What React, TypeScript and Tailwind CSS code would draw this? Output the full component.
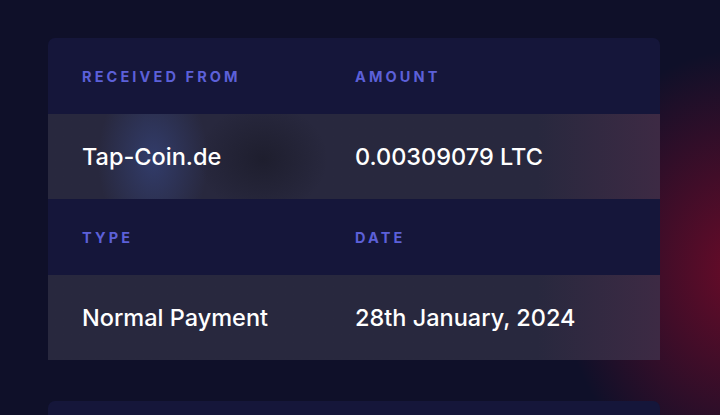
import React from "react";

function HeaderRow({ a, b }: { a: string; b: string }) {
  return (
    <div className="grid h-[76px] grid-cols-2 items-center bg-[#15163a] px-[34px] pt-[1px]">
      <div className="text-[14.5px] font-bold uppercase tracking-[0.215em] text-[#5c60d8]">{a}</div>
      <div className="pl-[1px] text-[14.5px] font-bold uppercase tracking-[0.215em] text-[#5c60d8]">{b}</div>
    </div>
  );
}

function ValueRow({ a, b, glow }: { a: string; b: string; glow?: boolean }) {
  return (
    <div className="relative grid h-[85px] grid-cols-2 items-center overflow-hidden bg-gradient-to-r from-[#28283e] via-[#28283e] via-80% to-[#3d2a44] px-[34px] pt-[1px]">
      {glow && (
        <>
          <div className="pointer-events-none absolute left-[50px] top-[-40px] h-[170px] w-[110px] rounded-full bg-[radial-gradient(closest-side,rgba(60,80,150,0.5),rgba(60,80,150,0))]" />
          <div className="pointer-events-none absolute left-[150px] top-[-10px] h-[110px] w-[130px] rounded-full bg-[radial-gradient(closest-side,rgba(20,20,30,0.5),rgba(20,20,30,0))]" />
        </>
      )}
      <div className="relative text-[23.5px] font-medium text-white">{a}</div>
      <div className="relative pl-[1px] text-[23.5px] font-medium text-white">{b}</div>
    </div>
  );
}

export default function App() {
  return (
    <div
      className="relative h-[415px] w-[720px] overflow-hidden bg-[#0f1029]"
      style={{ fontFamily: "Inter, 'Noto Sans', sans-serif" }}
    >
      <div className="pointer-events-none absolute left-[560px] top-[50px] h-[440px] w-[360px] rounded-full bg-[radial-gradient(closest-side,rgba(115,10,40,0.9),rgba(115,10,40,0))]" />
      <div className="relative px-[48px] pt-[38px]">
        <div className="w-[612px] overflow-hidden rounded-t-[7px]">
          <HeaderRow a="Received From" b="Amount" />
          <ValueRow a="Tap-Coin.de" b="0.00309079 LTC" glow />
          <HeaderRow a="Type" b="Date" />
          <ValueRow a="Normal Payment" b="28th January, 2024" />
        </div>
        <div className="mt-[41px] h-[40px] w-[612px] rounded-t-[7px] bg-[#15163a]" />
      </div>
    </div>
  );
}
